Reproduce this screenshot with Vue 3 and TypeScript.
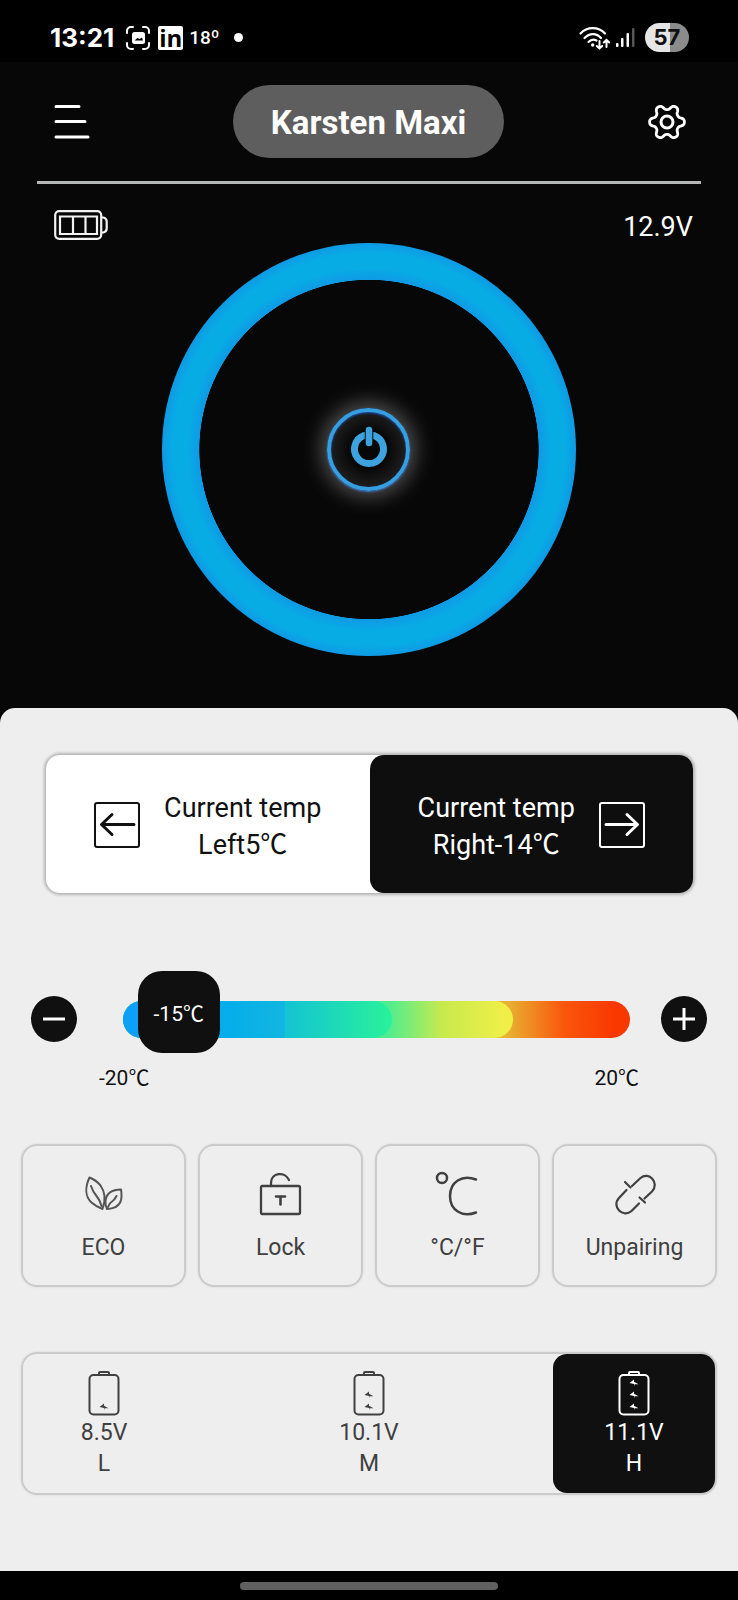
<script setup lang="ts">
import { computed, ref } from 'vue'

type Side = 'left' | 'right'

const side = ref<Side>('right')
const min = -20
const max = 20
const target = ref(-15.6)
const targetLabel = computed(() => `${Math.trunc(target.value)}℃`)
const targetPosition = computed(() => `${((target.value - min) / (max - min)) * 100}%`)

const step = (delta: number) => {
  target.value = Math.min(max, Math.max(min, Number(target.value) + delta))
}

// Six-lobed outline of the settings gear
const gear = `M${Array.from({ length: 120 }, (_, i) => {
  const a = (i / 120) * Math.PI * 2
  const r = 14.9 + 2.5 * Math.tanh(1.4 * Math.cos(6 * a)) / Math.tanh(1.4)
  return `${(r * Math.cos(a)).toFixed(2)} ${(r * Math.sin(a)).toFixed(2)}`
}).join('L')}Z`

const actions = [
  { id: 'eco', label: 'ECO' },
  { id: 'lock', label: 'Lock' },
  { id: 'unit', label: '°C/°F' },
  { id: 'unpair', label: 'Unpairing' },
]

const modes = [
  { id: 'L', volts: '8.5V', bolts: [37] },
  { id: 'M', volts: '10.1V', bolts: [25, 37] },
  { id: 'H', volts: '11.1V', bolts: [13, 25, 37] },
]
const mode = ref('H')
</script>

<template>
  <div class="app">
    <div class="status">
      <div class="status-side">
        <span class="clock">13:21</span>
        <svg class="shot" width="24" height="24" viewBox="0 0 24 24" fill="none" stroke="#fff" stroke-width="2" stroke-linecap="round">
          <path d="M1 7V5a4 4 0 0 1 4-4h2M17 1h2a4 4 0 0 1 4 4v2M23 17v2a4 4 0 0 1-4 4h-2M7 23H5a4 4 0 0 1-4-4v-2" />
          <rect x="6" y="6" width="13" height="12" rx="2.5" fill="#fff" stroke="none" />
          <path d="M8.5 14.5l3-2.5 2 1 2.500-1.500 1 3z" fill="#000" stroke="none" />
        </svg>
        <span class="linked">in</span>
        <span class="degrees">18º</span>
        <span class="dot"></span>
      </div>
      <div class="status-side">
        <svg class="wifi" width="31" height="24" viewBox="0 0 31 24" fill="none" stroke="#fff" stroke-width="2.200" stroke-linecap="round">
          <path d="M1.500 7.500C8 .3 19.500.3 26 7.500M5.500 12C10.500 6.800 17.500 6.800 22 12M9.500 16C12.500 13 15 13 17.500 14.500" />
          <circle cx="13.700" cy="19" r="1.700" fill="#fff" stroke="none" />
          <path d="M20.500 15v7M17.800 20l2.700 2.500 2.700-2.500M27.500 21v-7M24.800 16.500l2.700-2.700 2.700 2.700" stroke-width="2" />
        </svg>
        <svg class="signal" width="19" height="21" viewBox="0 0 19 21" fill="#fff">
          <rect x="0" y="16" width="2.500" height="4" rx="1" />
          <rect x="5" y="11" width="2.500" height="9" rx="1" />
          <rect x="10.500" y="6" width="2.500" height="14" rx="1" />
          <rect x="16" y="1" width="2.500" height="19" rx="1" fill="#555" />
        </svg>
        <span class="charge">57</span>
      </div>
    </div>

    <header class="header">
      <button class="icon-button" type="button" aria-label="Menu">
        <svg width="36" height="36" viewBox="0 0 36 36" stroke="#fff" stroke-width="3" stroke-linecap="round">
          <path d="M2 2.500h23M2 17.500h29M2 33h32" />
        </svg>
      </button>
      <h1 class="title">Karsten Maxi</h1>
      <button class="icon-button" type="button" aria-label="Settings">
        <svg width="40" height="40" viewBox="-20 -20 40 40" fill="none" stroke="#fff" stroke-width="2.800" stroke-linejoin="round">
          <path :d="gear" />
          <circle r="6" stroke-width="3" />
        </svg>
      </button>
    </header>

    <main class="main">
      <div class="supply">
        <svg width="54" height="30" viewBox="0 0 54 30" fill="none" stroke="#f2f2f2" stroke-width="2.200">
          <rect x="1.200" y="1.200" width="46" height="27.600" rx="4" />
          <path d="M48 7.500h1.500q3.200 1 3.200 4v7q0 3-3.200 4H48" />
          <path d="M6 6.500h37v17.500H6zM19 6.500v17.500M31.500 6.500v17.500" />
        </svg>
        <span class="volts">12.9V</span>
      </div>

      <div class="dial">
        <button class="power" type="button" aria-label="Power">
          <svg width="38" height="42" viewBox="0 0 38 42" fill="none" stroke="#3da2dd" stroke-linecap="round">
            <path d="M14 8.500a14.500 14.500 0 1 0 10 0" stroke-width="7" />
            <path d="M19 4v12" stroke="#0b0b0b" stroke-width="8.500" />
            <path d="M19 3v13" stroke-width="6.500" />
          </svg>
        </button>
      </div>

      <section class="panel">
        <div class="zones">
          <button class="zone" :class="{ on: side === 'left' }" type="button" :aria-pressed="side === 'left'" @click="side = 'left'">
            <svg width="46" height="46" viewBox="0 0 46 46" fill="none" stroke="currentColor" stroke-linecap="round" stroke-linejoin="round">
              <rect x="1" y="1" width="44" height="44" rx="2" stroke-width="2" />
              <path d="M40 22.500H8M18 12.500l-10.500 10L18 32.500" stroke-width="3" />
            </svg>
            <span class="zone-text">Current temp<br />Left5℃</span>
          </button>
          <button class="zone" :class="{ on: side === 'right' }" type="button" :aria-pressed="side === 'right'" @click="side = 'right'">
            <span class="zone-text">Current temp<br />Right-14℃</span>
            <svg width="46" height="46" viewBox="0 0 46 46" fill="none" stroke="currentColor" stroke-linecap="round" stroke-linejoin="round">
              <rect x="1" y="1" width="44" height="44" rx="2" stroke-width="2" />
              <path d="M7 22.500H38M28 12.500l10.500 10L28 32.500" stroke-width="3" />
            </svg>
          </button>
        </div>

        <div class="range">
          <button class="round" type="button" aria-label="Decrease temperature" @click="step(-1)">
            <svg width="22" height="22" viewBox="0 0 22 22" stroke="#fff" stroke-width="3"><path d="M0 11h22" /></svg>
          </button>
          <div class="track">
            <span class="band hot"></span>
            <span class="band warm"></span>
            <span class="band mild"></span>
            <span class="band cold"></span>
            <input v-model.number="target" class="slider" type="range" :min="min" :max="max" step="0.1" aria-label="Target temperature" />
            <output class="bubble" :style="{ left: targetPosition }">{{ targetLabel }}</output>
          </div>
          <button class="round" type="button" aria-label="Increase temperature" @click="step(1)">
            <svg width="22" height="22" viewBox="0 0 22 22" stroke="#fff" stroke-width="3"><path d="M0 11h22M11 0v22" /></svg>
          </button>
        </div>
        <div class="limits">
          <span>-20℃</span>
          <span>20℃</span>
        </div>

        <div class="actions">
          <button v-for="action in actions" :key="action.id" class="action" type="button">
            <svg width="44" height="44" viewBox="0 0 44 44" fill="none" stroke="#404040" stroke-width="2" stroke-linecap="round" stroke-linejoin="round">
              <g v-if="action.id === 'eco'" stroke="#555">
                <path d="M7.500 5.500C3.500 14 2.500 24 9.500 30.500Q14 34.500 20.500 37C23.500 29 24 21 18.500 13.500Q14 8 7.500 5.500z" />
                <path d="M9 14q2 6 5.500 10t5 10" />
                <path d="M39 17.500C30 17.500 24.500 21.500 23.500 28.500Q23 33 25 37C34 36.500 39.500 32 39.500 24Q39.500 20 39 17.500z" />
                <path d="M34.500 24q-2 4-4.500 5.500T26 35" />
              </g>
              <g v-else-if="action.id === 'lock'" stroke-width="2.300">
                <rect x="2" y="14" width="39" height="28" rx="1.500" />
                <path d="M12 14v-3C12 .5 26 -1 30 8" />
                <path d="M17 24.500h9M21.500 24.500v8" stroke-width="2.600" />
              </g>
              <g v-else-if="action.id === 'unit'" stroke-width="2.500">
                <circle cx="6" cy="6" r="5" />
                <path d="M40 7.500C26 2 14 10 14 24s12 22 26 16.500" />
              </g>
              <g v-else stroke-width="2.200">
                <path d="M19 14l8.500-8C36 -1 47 11 39 19.500l-7.500 7" />
                <path d="M13.500 18l-7.500 8C-2 34.500 10 46.500 18.500 39l7.500-7.500" />
                <path d="M12 10l5.500 5.500M26.500 25.500l5.500 5" />
              </g>
            </svg>
            <span>{{ action.label }}</span>
          </button>
        </div>

        <div class="modes">
          <button v-for="item in modes" :key="item.id" class="mode" :class="{ on: mode === item.id }" type="button" :aria-pressed="mode === item.id" @click="mode = item.id">
            <svg width="32" height="46" viewBox="0 0 32 46" fill="none" stroke="currentColor" stroke-width="2">
              <rect x="1.500" y="5" width="29" height="39.500" rx="4" />
              <path d="M11 5V3q0-1 1-1h8q1 0 1 1v2" />
              <path v-for="y in item.bolts" :key="y" :transform="`translate(16 ${y})`" d="M-4.500 0L0 -3.500V-1.200L4.500 1.300H0.500L0 3.500V1z" fill="currentColor" stroke="none" />
            </svg>
            <span>{{ item.volts }}<br />{{ item.id }}</span>
          </button>
        </div>
      </section>
    </main>

    <div class="nav"><span class="handle"></span></div>
  </div>
</template>

<style>
body {
  margin: 0;
  background: #000;
}
</style>

<style scoped>
.app {
  display: flex;
  flex-direction: column;
  min-height: 100vh;
  background: #070707;
  color: #fff;
  font-family: Roboto, "Liberation Sans", "Noto Sans CJK SC", sans-serif;
}

button {
  margin: 0;
  padding: 0;
  border: 0;
  background: none;
  color: inherit;
  font: inherit;
  cursor: pointer;
}

svg {
  display: block;
  flex: none;
  overflow: visible;
}

.status {
  display: flex;
  align-items: center;
  justify-content: space-between;
  box-sizing: border-box;
  height: 62px;
  padding: 13px 49px 0 50px;
  background: #000;
}

.status-side {
  display: flex;
  align-items: center;
}

.clock {
  font: 700 26px/30px Inter, Roboto, sans-serif;
}

.shot {
  margin-left: 12px;
}

.linked {
  width: 25px;
  margin-left: 8px;
  border-radius: 2px;
  background: #fff;
  color: #000;
  font: 700 24px/24px "Open Sans", sans-serif;
  text-align: center;
}

.degrees {
  margin-left: 6px;
  font: 500 19px/24px Roboto, sans-serif;
}

.dot {
  width: 9px;
  height: 9px;
  margin-left: 14px;
  border-radius: 50%;
  background: #fff;
}

.signal {
  margin-left: 6px;
}

.charge {
  width: 44px;
  margin-left: 10px;
  border-radius: 15px;
  background: linear-gradient(90deg, #e6e6e6 56%, #8b8b8b 56%);
  color: #111;
  font: 700 22px/29px Inter, Roboto, sans-serif;
  text-align: center;
}

.header {
  display: flex;
  align-items: center;
  justify-content: space-between;
  margin: 0 37px;
  padding: 23px 14px 23px 17px;
  border-bottom: 3px solid #b4b6b6;
}

.title {
  margin: 0;
  padding: 3px 38px 0;
  border-radius: 37px;
  background: #5e5e5e;
  font-size: 33px;
  font-weight: 700;
  line-height: 70px;
}

.main {
  display: flex;
  flex: 1;
  flex-direction: column;
}

.supply {
  display: flex;
  align-items: flex-end;
  justify-content: space-between;
  height: 59px;
  padding: 0 45px 0 54px;
}

.supply svg {
  margin-bottom: 3px;
}

.volts {
  font-size: 27px;
  line-height: 32px;
}

.dial {
  display: grid;
  place-items: center;
  align-self: center;
  width: 56%;
  margin-bottom: 52px;
  border-radius: 50%;
  background: radial-gradient(circle closest-side, #070707 82%, #0e9ae5 82.300%, #08ace5 88%, #08ace5 95%, #0e9ae5 100%);
  aspect-ratio: 1;
}

.power {
  display: grid;
  place-items: center;
  box-sizing: border-box;
  width: 83px;
  height: 83px;
  padding-bottom: 3px;
  border: 4px solid #359fe0;
  border-radius: 50%;
  background: radial-gradient(circle, #070707 35%, #303030 100%);
  box-shadow: 0 0 22px 4px rgba(255, 255, 255, 0.350), 0 1px 2px #1450c0, inset 0 1px 2px #1450c0;
}

.panel {
  flex: 1;
  padding: 47px 21px 75px;
  border-radius: 15px 15px 0 0;
  background: #eee;
  color: #111;
}

.zones {
  display: grid;
  grid-template-columns: 1fr 1fr;
  margin: 0 24px 0 25px;
  border-radius: 14px;
  background: #fff;
  box-shadow: 0 0 3px 2px rgba(0, 0, 0, 0.240);
}

.zone {
  display: flex;
  align-items: center;
  justify-content: center;
  gap: 24px;
  height: 138px;
  padding-top: 2px;
  border-radius: 14px;
  font-size: 27px;
  line-height: 37px;
}

.zone-text {
  padding-top: 3px;
}

.zone.on {
  background: #0e0e0e;
  color: #fff;
}

.range {
  display: flex;
  align-items: center;
  gap: 46px;
  height: 82px;
  margin: 85px 10px 0;
}

.round {
  display: grid;
  z-index: 1;
  flex: none;
  place-items: center;
  width: 46px;
  height: 46px;
  border-radius: 50%;
  background: #101010;
}

.range .round:last-child {
  margin-left: -15px;
}

.track {
  position: relative;
  display: grid;
  flex: 1;
  height: 37px;
}

.band {
  grid-area: 1 / 1;
  border-radius: 19px;
}

.hot {
  background: linear-gradient(90deg, #e4c038 74%, #fa560c 87%, #f93800 97%);
}

.warm {
  width: 77%;
  background: linear-gradient(90deg, #4fed90 68%, #c8ea4c 82%, #f0ef48 98%);
}

.mild {
  width: 53%;
  background: linear-gradient(90deg, #14c4d2 61%, #28f09c 98%);
}

.cold {
  width: 32%;
  border-radius: 19px 0 0 19px;
  background: linear-gradient(90deg, #0ca0fb 10%, #05aeea 65%, #12b6e0);
}

.slider {
  position: absolute;
  top: -30px;
  right: -41px;
  left: -41px;
  height: 82px;
  margin: 0;
  background: none;
  appearance: none;
}

.slider::-webkit-slider-thumb {
  width: 82px;
  height: 82px;
  border-radius: 24px;
  background: #101010;
  appearance: none;
}

.bubble {
  position: absolute;
  top: -30px;
  color: #fff;
  font-size: 21px;
  line-height: 86px;
  pointer-events: none;
  transform: translateX(-50%);
}

.limits {
  display: flex;
  justify-content: space-between;
  margin: 5px 78px 0;
  font-size: 21px;
  line-height: 26px;
}

.actions {
  display: grid;
  grid-template-columns: repeat(4, 1fr);
  gap: 12px;
  margin-top: 53px;
}

.action,
.modes {
  box-sizing: border-box;
  height: 143px;
  border: 2px solid #cbcbcb;
  border-radius: 16px;
  box-shadow: 0 0 2px #d4d4d4;
  color: #404040;
}

.action {
  display: flex;
  flex-direction: column;
  align-items: center;
  gap: 16px;
  padding: 26px 0 0;
  font-size: 23px;
  line-height: 31px;
}

.modes {
  display: flex;
  justify-content: space-between;
  margin-top: 65px;
}

.mode {
  display: flex;
  flex-direction: column;
  align-items: center;
  gap: 1px;
  box-sizing: border-box;
  width: 162px;
  height: 139px;
  padding-top: 16px;
  border-radius: 14px;
  font-size: 23px;
  line-height: 31px;
}

.mode.on {
  background: #101010;
  color: #fff;
}

.nav {
  display: grid;
  place-items: center;
  height: 29px;
  background: #000;
}

.handle {
  width: 35%;
  height: 8px;
  border-radius: 4px;
  background: #606060;
}
</style>
